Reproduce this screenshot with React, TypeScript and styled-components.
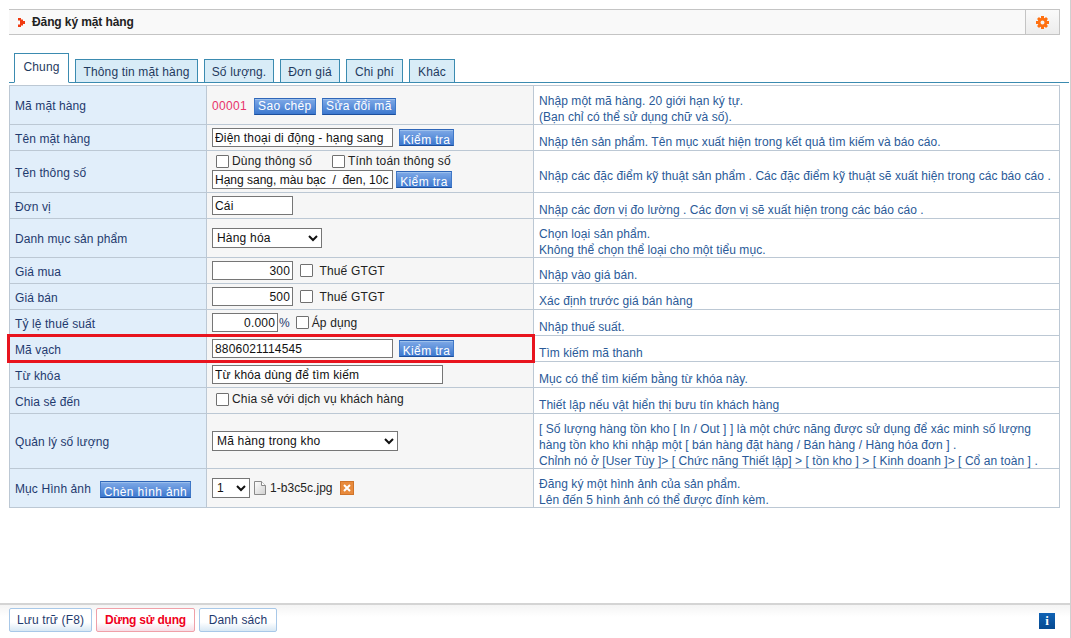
import { FC, ReactNode } from 'react'
import styled, { createGlobalStyle } from 'styled-components'

const Global = createGlobalStyle`
  html, body { margin: 0; padding: 0; background: #fff; }
  body { font-family: "Liberation Sans", Arial, sans-serif; font-size: 12px; color: #1f3a6e; }
`

const Page = styled.div`
  width: 1071px;
  height: 638px;
  box-sizing: border-box;
  border-right: 1px solid #d0d0d0;
  display: flex;
  flex-direction: column;
  overflow: hidden;
`
const Main = styled.div`
  flex: 1;
  padding: 9px 1px 0 9px;
`
const TitleBar = styled.div`
  width: 1051px;
  height: 24px;
  display: flex;
  align-items: center;
  border-top: 1px solid #c4c4c4;
  border-bottom: 1px solid #c4c4c4;
  background: #f9f9f9;
`
const TitleText = styled.div`
  flex: 1;
  display: flex;
  align-items: center;
  gap: 7px;
  padding-left: 9px;
  font-weight: bold;
  color: #222;
  letter-spacing: -0.1px;
`
const GearBox = styled.div`
  width: 35px;
  height: 24px;
  box-sizing: border-box;
  border-left: 1px solid #c4c4c4;
  border-right: 1px solid #c4c4c4;
  display: flex;
  align-items: center;
  justify-content: center;
  background: linear-gradient(#fafafa, #ececec);
`
const Tabs = styled.div`
  margin-top: 18px;
  height: 29px;
  padding-left: 5px;
  display: flex;
  align-items: flex-end;
  gap: 6px;
  border-bottom: 1px solid #3b8bb0;
`
const Tab = styled.div<{ $active?: boolean; $w: number }>`
  box-sizing: border-box;
  width: ${p => p.$w}px;
  height: ${p => (p.$active ? 30 : 24)}px;
  margin-bottom: -1px;
  padding: ${p => (p.$active ? '0 0 2px' : '2px 0 0')};
  display: flex;
  align-items: center;
  justify-content: center;
  border: 1px solid #3b8bb0;
  border-bottom: ${p => (p.$active ? '1px solid #fff' : '1px solid #3b8bb0')};
  background: ${p => (p.$active ? '#fff' : '#d8ecf7')};
  color: #1f3a5e;
  font-size: 12px;
  letter-spacing: 0.15px;
  white-space: nowrap;
`
const TableWrap = styled.div`
  position: relative;
  margin-top: 2px;
`
const Table = styled.table`
  width: 1051px;
  table-layout: fixed;
  border-collapse: collapse;
  border: 1px solid #c0c8d0;
`
const Row = styled.tr<{ $h: number }>`
  height: ${p => p.$h}px;
`
const Label = styled.td`
  box-sizing: border-box;
  padding: 2px 5px 0;
  background: #e1eefa;
  border: 1px solid #bcc8d4;
  color: #1f3a6e;
  letter-spacing: 0.1px;
`
const Value = styled.td`
  box-sizing: border-box;
  padding: 0 5px;
  background: #f6f6f6;
  border: 1px solid #bcc8d4;
`
const Help = styled.td`
  box-sizing: border-box;
  padding: 6px 5px 0;
  background: #fff;
  border: 1px solid #bcc8d4;
  color: #2a5a98;
  line-height: 16px;
  letter-spacing: 0.06px;
  white-space: nowrap;
`
const HelpBody = styled.div`
  margin-bottom: -2px;
`
const Line = styled.div<{ $gap?: number; $top?: number }>`
  display: flex;
  align-items: center;
  gap: ${p => p.$gap ?? 6}px;
  margin-top: ${p => p.$top ?? 0}px;
`
const Code = styled.span`
  color: #e8336a;
  margin-right: 1px;
  letter-spacing: 0.3px;
`
const Input = styled.input<{ $w: number; $right?: boolean; $tight?: boolean }>`
  width: ${p => p.$w}px;
  height: 19px;
  box-sizing: border-box;
  padding: 0 2px;
  border: 1px solid #767676;
  background: #fff;
  color: #111;
  font: 12px "Liberation Sans", Arial, sans-serif;
  letter-spacing: ${p => (p.$tight ? 0 : 0.17)}px;
  text-align: ${p => (p.$right ? 'right' : 'left')};
  border-radius: 0;
  outline: none;
`
const BlueBtn = styled.button<{ $w: number; $low?: boolean }>`
  width: ${p => p.$w}px;
  height: 17px;
  box-sizing: border-box;
  padding: ${p => (p.$low ? '4px 0 0' : '1px 0 0')};
  border: 1px solid #3f78c8;
  border-top-color: #2f66b8;
  border-bottom-color: #1d4f9c;
  box-shadow: inset 0 1px 0 #9cc0ec;
  background: linear-gradient(#7fa9e6, #3c78cf);
  color: #fff;
  font: 12px "Liberation Sans", Arial, sans-serif;
  letter-spacing: 0.35px;
  overflow: hidden;
  white-space: nowrap;
  line-height: 13px;
`
const Check = styled.input.attrs({ type: 'checkbox' })`
  appearance: none;
  width: 13px;
  height: 13px;
  margin: 0;
  box-sizing: border-box;
  border: 1px solid #707070;
  border-radius: 1px;
  background: #fff;
`
const CheckLabel = styled.label<{ $mr?: number; $ml?: number }>`
  display: inline-flex;
  align-items: center;
  gap: 3px;
  color: #222;
  letter-spacing: 0.15px;
  margin-right: ${p => p.$mr ?? 0}px;
  margin-left: ${p => p.$ml ?? 0}px;
`
const Select = styled.select<{ $w: number }>`
  width: ${p => p.$w}px;
  height: 20px;
  box-sizing: border-box;
  border: 1px solid #767676;
  border-radius: 0;
  background: #fff;
  color: #111;
  font: 12px "Liberation Sans", Arial, sans-serif;
  letter-spacing: 0.2px;
  padding-left: 0;
`
const FileName = styled.span`
  color: #222;
  margin-right: 3px;
  letter-spacing: 0.05px;
`
const LabelFlex = styled.div`
  display: flex;
  align-items: center;
  gap: 9px;
`
const RedBox = styled.div`
  position: absolute;
  left: -2px;
  top: 249px;
  width: 528px;
  height: 29px;
  box-sizing: border-box;
  border: 3px solid #e8141e;
  pointer-events: none;
`
const Footer = styled.div`
  height: 35px;
  box-sizing: border-box;
  border-top: 2px solid #d4d4d4;
  padding: 3px 15px 0 9px;
  display: flex;
  align-items: flex-start;
  justify-content: space-between;
  background: linear-gradient(#f4f4f4, #fff 12px);
`
const FooterBtns = styled.div`
  display: flex;
  gap: 4px;
`
const FootBtn = styled.button<{ $danger?: boolean; $w: number }>`
  width: ${p => p.$w}px;
  height: 24px;
  box-sizing: border-box;
  padding: 0;
  border: 1px solid ${p => (p.$danger ? '#f0a0a8' : '#a8c8e8')};
  border-radius: 2px;
  background: ${p =>
    p.$danger
      ? 'linear-gradient(#fff 60%, #f6dde6)'
      : 'linear-gradient(#fff 60%, #d8e8f4)'};
  color: ${p => (p.$danger ? '#f00020' : '#1f3a6e')};
  font: ${p => (p.$danger ? 'bold' : 'normal')} 12px "Liberation Sans", Arial, sans-serif;
  letter-spacing: ${p => (p.$danger ? -0.2 : 0.15)}px;
`
const InfoIcon = styled.div`
  width: 16px;
  height: 16px;
  margin-top: 5px;
  background: linear-gradient(#0f62b4, #064a90);
  color: #fff;
  display: flex;
  align-items: center;
  justify-content: center;
  font: bold 13px "Liberation Serif", serif;
`

const Bullet: FC = () => (
  <svg width="7" height="9" viewBox="0 0 7 9">
    <path d="M0 0h3v1.5h2V3h2v3H5v1.5H3V9H0V6.5h2v-4H0z" fill="#f03a10" />
  </svg>
)
const Gear: FC = () => (
  <svg width="13" height="13" viewBox="0 0 13 13">
    <circle cx="6.5" cy="6.5" r="3.4" fill="none" stroke="#ff7010" strokeWidth="2.8" />
    <path
      d="M5 0h3v2H5zM5 11h3v2H5zM0 5h2v3H0zM11 5h2v3h-2zM1 3l2-2 2 2-2 2zM12 3l-2-2-2 2 2 2zM1 10l2 2 2-2-2-2zM12 10l-2 2-2-2 2-2z"
      fill="#ff7010"
    />
  </svg>
)
const FileIcon: FC = () => (
  <svg width="12" height="14" viewBox="0 0 12 14">
    <defs>
      <linearGradient id="fileFill" x1="0" y1="0" x2="1" y2="1">
        <stop offset="0" stopColor="#fff" />
        <stop offset="1" stopColor="#d0d0d0" />
      </linearGradient>
    </defs>
    <path d="M.5.5h7l4 4v9H.5z" fill="url(#fileFill)" stroke="#8a8a8a" />
    <path d="M7.5.5v4h4" fill="#fff" stroke="#8a8a8a" />
  </svg>
)
const DelIcon: FC = () => (
  <svg width="14" height="14" viewBox="0 0 14 14">
    <rect x=".5" y=".5" width="13" height="13" fill="#e88a3c" stroke="#d0742a" />
    <path d="M4 4l6 6M10 4l-6 6" stroke="#fff" strokeWidth="2" />
  </svg>
)

type ItemRow = { label: ReactNode; h: number; value: ReactNode; help: ReactNode }

const rows: ItemRow[] = [
  {
    label: 'Mã mặt hàng',
    h: 39,
    value: (
      <Line $top={2}>
        <Code>00001</Code>
        <BlueBtn $w={62}>Sao chép</BlueBtn>
        <BlueBtn $w={74}>Sửa đổi mã</BlueBtn>
      </Line>
    ),
    help: (
      <>
        Nhập một mã hàng. 20 giới hạn ký tự.
        <br />
        (Bạn chỉ có thể sử dụng chữ và số).
      </>
    ),
  },
  {
    label: 'Tên mặt hàng',
    h: 26,
    value: (
      <Line>
        <Input $w={181} defaultValue="Điện thoại di động - hạng sang" />
        <BlueBtn $w={55} $low>Kiểm tra</BlueBtn>
      </Line>
    ),
    help: 'Nhập tên sản phẩm. Tên mục xuất hiện trong kết quả tìm kiếm và báo cáo.',
  },
  {
    label: 'Tên thông số',
    h: 42,
    value: (
      <>
        <Line $gap={0}>
          <CheckLabel $ml={4} $mr={20}><Check />Dùng thông số</CheckLabel>
          <CheckLabel><Check />Tính toán thông số</CheckLabel>
        </Line>
        <Line $gap={3} $top={2}>
          <Input $w={181} $tight defaultValue="Hạng sang, màu bạc  /  đen, 10c" />
          <BlueBtn $w={56} $low>Kiểm tra</BlueBtn>
        </Line>
      </>
    ),
    help: 'Nhập các đặc điểm kỹ thuật sản phẩm . Các đặc điểm kỹ thuật sẽ xuất hiện trong các báo cáo .',
  },
  {
    label: 'Đơn vị',
    h: 26,
    value: <Input $w={81} defaultValue="Cái" />,
    help: 'Nhập các đơn vị đo lường . Các đơn vị sẽ xuất hiện trong các báo cáo .',
  },
  {
    label: 'Danh mục sản phẩm',
    h: 39,
    value: (
      <Select $w={110} defaultValue="Hàng hóa">
        <option>Hàng hóa</option>
      </Select>
    ),
    help: (
      <>
        Chọn loại sản phẩm.
        <br />
        Không thể chọn thể loại cho một tiểu mục.
      </>
    ),
  },
  {
    label: 'Giá mua',
    h: 26,
    value: (
      <Line $gap={7}>
        <Input $w={81} $right defaultValue="300" />
        <CheckLabel><Check />&nbsp;Thuế GTGT</CheckLabel>
      </Line>
    ),
    help: 'Nhập vào giá bán.',
  },
  {
    label: 'Giá bán',
    h: 26,
    value: (
      <Line $gap={7}>
        <Input $w={81} $right defaultValue="500" />
        <CheckLabel><Check />&nbsp;Thuế GTGT</CheckLabel>
      </Line>
    ),
    help: 'Xác định trước giá bán hàng',
  },
  {
    label: 'Tỷ lệ thuế suất',
    h: 26,
    value: (
      <Line $gap={1}>
        <Input $w={66} $right defaultValue="0.000" />
        <span>%</span>
        <CheckLabel $ml={5}><Check />Áp dụng</CheckLabel>
      </Line>
    ),
    help: 'Nhập thuế suất.',
  },
  {
    label: 'Mã vạch',
    h: 26,
    value: (
      <Line>
        <Input $w={181} defaultValue="8806021114545" />
        <BlueBtn $w={55} $low>Kiểm tra</BlueBtn>
      </Line>
    ),
    help: 'Tìm kiếm mã thanh',
  },
  {
    label: 'Từ khóa',
    h: 26,
    value: <Input $w={231} defaultValue="Từ khóa dùng để tìm kiếm" />,
    help: 'Mục có thể tìm kiếm bằng từ khóa này.',
  },
  {
    label: 'Chia sẻ đến',
    h: 26,
    value: <CheckLabel $ml={4}><Check />Chia sẻ với dịch vụ khách hàng</CheckLabel>,
    help: 'Thiết lập nếu vật hiển thị bưu tín khách hàng',
  },
  {
    label: 'Quản lý số lượng',
    h: 55,
    value: (
      <Select $w={186} defaultValue="Mã hàng trong kho">
        <option>Mã hàng trong kho</option>
      </Select>
    ),
    help: (
      <>
        [ Số lượng hàng tồn kho [ In / Out ] ] là một chức năng được sử dụng để xác minh số lượng
        <br />
        hàng tồn kho khi nhập một [ bán hàng đặt hàng / Bán hàng / Hàng hóa đơn ] .
        <br />
        Chỉnh nó ở [User Tùy ]&gt; [ Chức năng Thiết lập] &gt; [ tồn kho ] &gt; [ Kinh doanh ]&gt; [ Cổ an toàn ] .
      </>
    ),
  },
  {
    label: (
      <LabelFlex>
        Mục Hình ảnh
        <BlueBtn $w={91} $low>Chèn hình ảnh</BlueBtn>
      </LabelFlex>
    ),
    h: 39,
    value: (
      <Line $gap={4}>
        <Select $w={38} defaultValue="1">
          <option>1</option>
        </Select>
        <FileIcon />
        <FileName>1-b3c5c.jpg</FileName>
        <DelIcon />
      </Line>
    ),
    help: (
      <>
        Đăng ký một hình ảnh của sản phẩm.
        <br />
        Lên đến 5 hình ảnh có thể được đính kèm.
      </>
    ),
  },
]

const tabs = [
  { text: 'Chung', w: 55 },
  { text: 'Thông tin mặt hàng', w: 123 },
  { text: 'Số lượng.', w: 70 },
  { text: 'Đơn giá', w: 60 },
  { text: 'Chi phí', w: 57 },
  { text: 'Khác', w: 46 },
]

export default function App() {
  return (
    <Page>
      <Global />
      <Main>
        <TitleBar>
          <TitleText>
            <Bullet />
            Đăng ký mặt hàng
          </TitleText>
          <GearBox>
            <Gear />
          </GearBox>
        </TitleBar>
        <Tabs>
          {tabs.map((t, i) => (
            <Tab key={t.text} $w={t.w} $active={i === 0}>{t.text}</Tab>
          ))}
        </Tabs>
        <TableWrap>
          <Table>
            <colgroup>
              <col width={197} />
              <col width={327} />
              <col />
            </colgroup>
            <tbody>
              {rows.map((r, i) => (
                <Row key={i} $h={r.h}>
                  <Label>{r.label}</Label>
                  <Value>{r.value}</Value>
                  <Help><HelpBody>{r.help}</HelpBody></Help>
                </Row>
              ))}
            </tbody>
          </Table>
          <RedBox />
        </TableWrap>
      </Main>
      <Footer>
        <FooterBtns>
          <FootBtn $w={83}>Lưu trữ (F8)</FootBtn>
          <FootBtn $w={99} $danger>Dừng sử dụng</FootBtn>
          <FootBtn $w={78}>Danh sách</FootBtn>
        </FooterBtns>
        <InfoIcon>i</InfoIcon>
      </Footer>
    </Page>
  )
}
